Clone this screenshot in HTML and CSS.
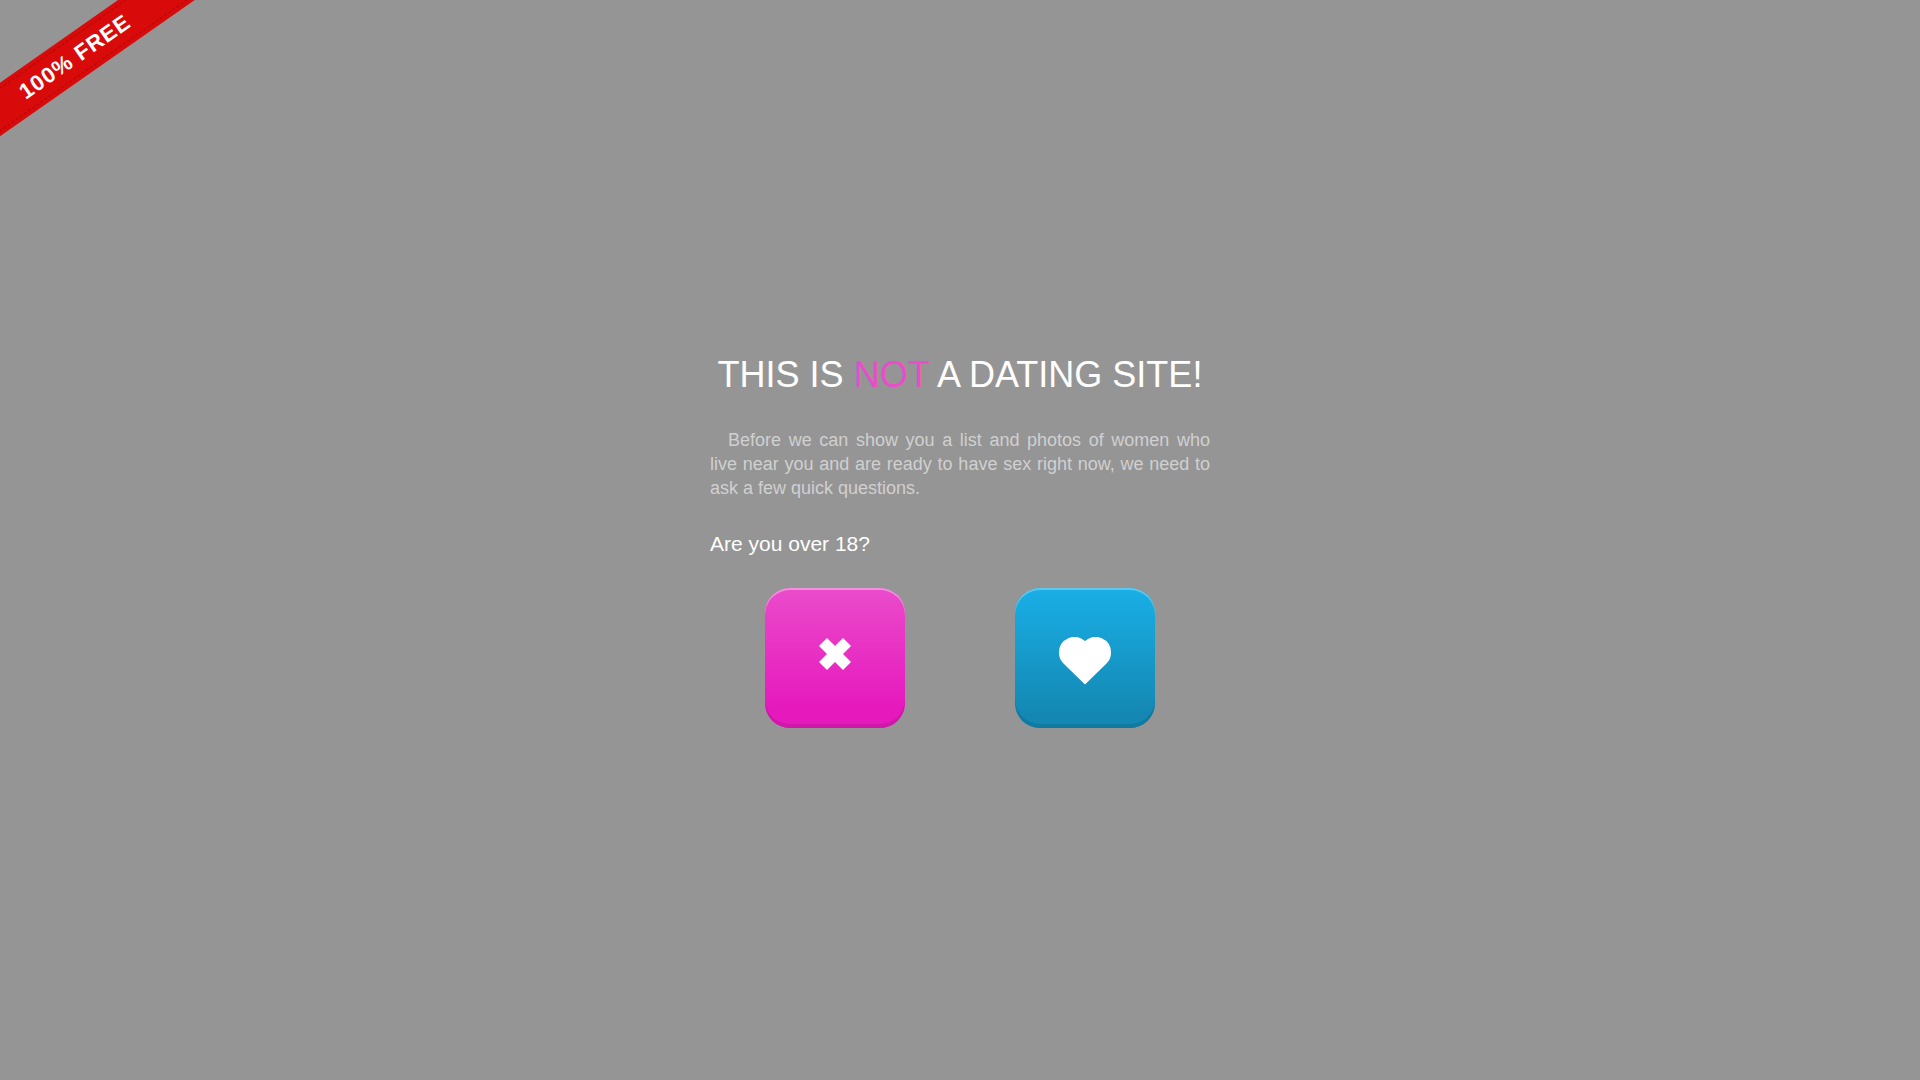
FILE: index.html
```html
<!DOCTYPE html>
<html lang="en">

<head>
    <meta charset="UTF-8">
    <meta name="viewport" content="width=device-width, initial-scale=1.0">
    <title>This is not a dating site!</title>
    <link rel="stylesheet" href="styles.css">
</head>

<body>
    <div class="ribbon">
        <span class="ribbon-text">100% FREE</span>
    </div>
    <main class="container">
        <h1>This is <span class="accent">not</span> a dating site!</h1>
        <p class="intro">Before we can show you a list and photos of women who live near you and are ready to have sex
            right now, we need to ask a few quick questions.</p>
        <h2 id="question">Are you over 18?</h2>
        <div class="answers" role="group" aria-labelledby="question">
            <button type="button" class="btn btn-no" aria-label="No">
                <svg width="32" height="32" viewBox="0 0 32 32" aria-hidden="true">
                    <path d="M8 0L16 8L24 0L32 8L24 16L32 24L24 32L16 24L8 32L0 24L8 16L0 8Z" fill="#fff" />
                </svg>
            </button>
            <button type="button" class="btn btn-yes" aria-label="Yes">
                <svg width="52" height="48" viewBox="0 0 52 48" aria-hidden="true">
                    <path d="M26 47.500L4.500 26.500A15.500 15.500 0 0 1 0 15.500A15.500 15.500 0 0 1 26 4.100A15.500 15.500 0 0 1 52 15.500A15.500 15.500 0 0 1 47.500 26.500Z" fill="#fff" />
                </svg>
            </button>
        </div>
    </main>
</body>

</html>
```
FILE: styles.css
```css
* {
    box-sizing: border-box;
}

body {
    display: flex;
    align-items: center;
    justify-content: center;
    min-height: 100vh;
    margin: 0;
    background-color: #959595;
    color: #fff;
    font-family: "Liberation Sans", Arial, sans-serif;
    overflow: hidden;
}

/* Corner ribbon */
.ribbon {
    position: absolute;
    top: 35px;
    left: -75px;
    width: 300px;
    padding: 4px 0;
    background-color: #d90a0a;
    transform: rotate(-35deg);
}

.ribbon-text {
    display: block;
    border-top: 1px dashed #b00808;
    border-bottom: 1px dashed #b00808;
    font-size: 22px;
    font-weight: bold;
    line-height: 34px;
    letter-spacing: 1px;
    text-align: center;
}

.container {
    width: 500px;
    max-width: 100%;
}

h1 {
    margin: 0 0 30px;
    font-size: 36px;
    font-weight: normal;
    line-height: 46px;
    text-align: center;
    text-transform: uppercase;
}

.accent {
    color: #ea4ccb;
}

.intro {
    margin: 0 0 30px;
    color: #d0d0d0;
    font-size: 18px;
    line-height: 24px;
    text-align: justify;
    text-indent: 18px;
}

h2 {
    margin: 0 0 30px;
    font-size: 21px;
    font-weight: normal;
    line-height: 28px;
}

.answers {
    display: flex;
    justify-content: space-around;
}

.btn {
    display: flex;
    align-items: center;
    justify-content: center;
    width: 140px;
    height: 140px;
    padding: 0;
    border: none;
    border-radius: 25px;
    cursor: pointer;
}

.btn-no {
    background: linear-gradient(#ea4ccb, #e619bd 85%);
    box-shadow: inset 0 2px 0 #f191dd, inset 0 -4px 0 #cf17aa;
}

.btn-no svg {
    margin-bottom: 8px;
}

.btn-yes {
    background: linear-gradient(#19afe6, #1488b3 90%);
    box-shadow: inset 0 2px 0 #5ec7ee, inset 0 -4px 0 #117aa1;
}

.btn-yes svg {
    margin-top: 6px;
}
```
